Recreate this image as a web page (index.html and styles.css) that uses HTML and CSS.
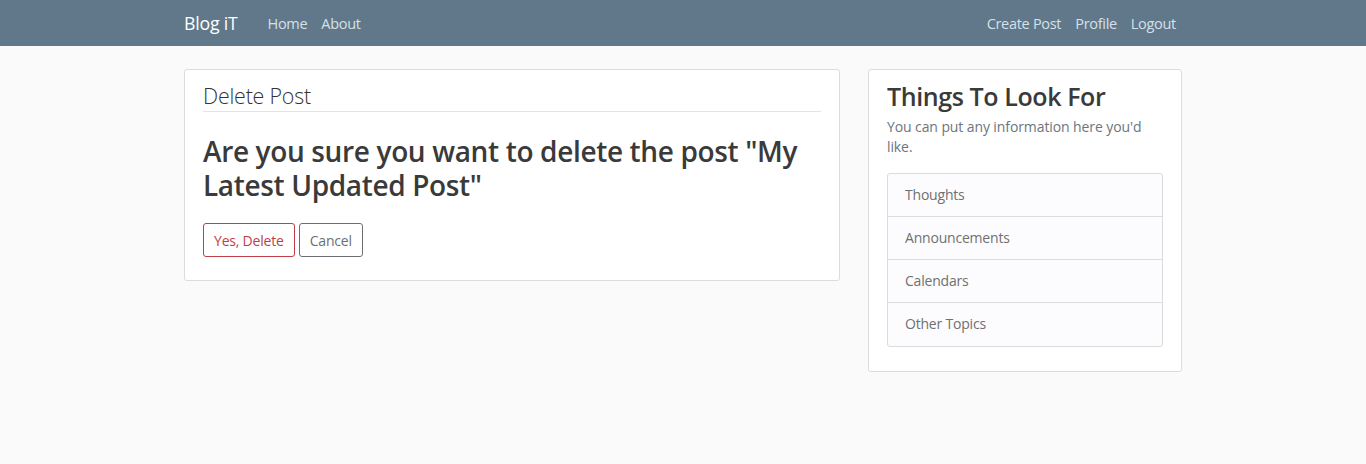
FILE: index.html
```html
<!DOCTYPE html>
<html>
<head>
<meta charset="utf-8">
<link rel="stylesheet" href="styles.css">
</head>
<body>
<nav class="navbar">
  <div class="container nav-inner">
    <a class="brand" href="#">Blog iT</a>
    <ul class="nav-links">
      <li><a href="#">Home</a></li>
      <li><a href="#">About</a></li>
    </ul>
    <ul class="nav-links nav-right">
      <li><a href="#">Create Post</a></li>
      <li><a href="#">Profile</a></li>
      <li><a href="#">Logout</a></li>
    </ul>
  </div>
</nav>
<main class="container row">
  <section class="col-main">
    <div class="card">
      <h4 class="card-title">Delete Post</h4>
      <h2 class="confirm">Are you sure you want to delete the post "My Latest Updated Post"</h2>
      <div class="actions">
        <button class="btn btn-danger">Yes, Delete</button>
        <button class="btn btn-secondary">Cancel</button>
      </div>
    </div>
  </section>
  <aside class="col-side">
    <div class="card side-card">
      <h3 class="side-title">Things To Look For</h3>
      <p class="side-text">You can put any information here you'd like.</p>
      <ul class="list-group">
        <li>Thoughts</li>
        <li>Announcements</li>
        <li>Calendars</li>
        <li>Other Topics</li>
      </ul>
    </div>
  </aside>
</main>
</body>
</html>
```
FILE: styles.css
```css
* { box-sizing: border-box; }
body {
  margin: 0;
  background: #fafafa;
  font-family: "Open Sans", "Noto Sans", sans-serif;
  color: #333;
}
.container {
  width: 1028px;
  margin: 0 auto;
  padding: 0 15px;
}
.navbar {
  background: #60788a;
  height: 46px;
}
.nav-inner {
  display: flex;
  align-items: center;
  height: 45px;
}
.brand {
  color: #fff;
  text-decoration: none;
  font-size: 17.7px;
  margin-right: 30px;
  letter-spacing: -0.2px;
}
.nav-links {
  list-style: none;
  margin: 0;
  padding: 0;
  display: flex;
  gap: 14px;
}
.nav-links a {
  color: #d6e0e8;
  text-decoration: none;
  font-size: 14.5px;
  letter-spacing: -0.3px;
}
.nav-right {
  margin-left: auto;
  margin-right: 6px;
}
.row {
  display: flex;
  gap: 28px;
  padding-top: 23px;
}
.col-main { width: 656px; }
.col-side { width: 314px; }
.card {
  background: #fff;
  border: 1px solid #dcdcdc;
  border-radius: 3px;
  padding: 12px 18px 23px;
}
.card-title {
  margin: 0;
  font-weight: 300;
  font-size: 21.4px;
  line-height: 28px;
  color: #333;
  border-bottom: 1px solid #e3e3e3;
  padding-bottom: 1px;
  letter-spacing: -0.2px;
}
.confirm {
  margin: 22px 0 21px;
  font-size: 28px;
  font-weight: 600;
  line-height: 34px;
  color: #3a3a3a;
  letter-spacing: -0.35px;
}
.actions { display: flex; gap: 4px; }
.btn {
  font-family: inherit;
  background: #fff;
  border: 1px solid;
  border-radius: 3px;
  height: 34px;
  padding: 0 10px;
  font-size: 14px;
  letter-spacing: -0.2px;
}
.btn-danger { border-color: #c23d46; color: #c23d46; }
.btn-secondary { border-color: #6b6f74; color: #6b6f74; }
.side-card { padding: 10px 18px 24px; }
.side-title {
  margin: 0;
  font-size: 25px;
  font-weight: 600;
  line-height: 32px;
  color: #3a3a3a;
  letter-spacing: -0.4px;
}
.side-text {
  margin: 5px 0 16px;
  font-size: 14px;
  line-height: 20px;
  color: #6c757d;
  letter-spacing: -0.1px;
}
.list-group {
  list-style: none;
  margin: 0;
  padding: 0;
  border: 1px solid #dcdcdc;
  border-radius: 3px;
  background: #fcfcfe;
}
.list-group li {
  height: 43px;
  line-height: 42px;
  padding: 0 17px;
  font-size: 14px;
  color: #707070;
  border-top: 1px solid #dcdcdc;
  letter-spacing: -0.2px;
}
.list-group li:first-child { border-top: none; height: 42px; }
.list-group li:last-child { height: 44px; }
```
